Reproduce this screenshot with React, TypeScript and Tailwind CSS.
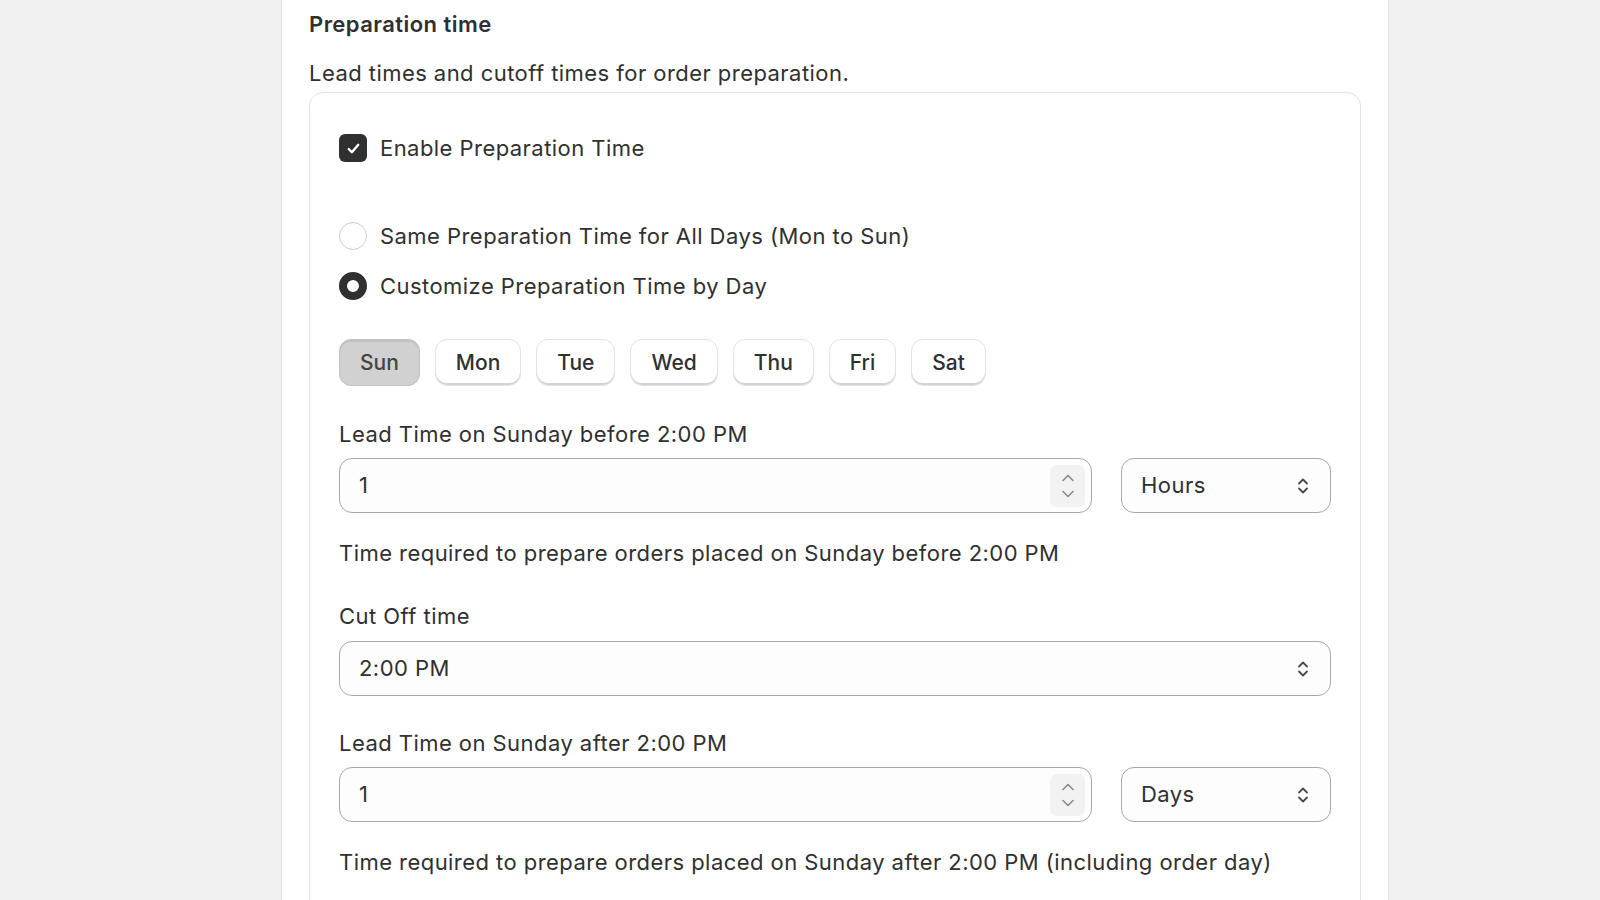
import React from 'react';

const days = ['Sun', 'Mon', 'Tue', 'Wed', 'Thu', 'Fri', 'Sat'];

function SelectIcon() {
  return (
    <svg width="14" height="24" viewBox="0 0 14 24" fill="none" stroke="#4a4a4a" strokeWidth="1.8" strokeLinecap="round" strokeLinejoin="round">
      <path d="M3 9.5 7 5.5l4 4" />
      <path d="M3 14.5 7 18.5l4-4" />
    </svg>
  );
}

function Spinner() {
  return (
    <div className="flex h-[42px] w-[35px] flex-col items-center justify-center gap-[6px] rounded-[7px] bg-[#f2f2f2]">
      <svg width="16" height="10" viewBox="0 0 16 10" fill="none" stroke="#8a8a8a" strokeWidth="1.6" strokeLinecap="round" strokeLinejoin="round">
        <path d="M3 7.5 8 2.5l5 5" />
      </svg>
      <svg width="16" height="10" viewBox="0 0 16 10" fill="none" stroke="#8a8a8a" strokeWidth="1.6" strokeLinecap="round" strokeLinejoin="round">
        <path d="M3 2.5 8 7.5l5-5" />
      </svg>
    </div>
  );
}

function NumberField({ value }: { value: string }) {
  return (
    <div className="flex h-[55px] flex-1 items-center rounded-[13px] border border-[#a8a8a8] bg-[#fdfdfd] pl-[19px] pr-[6px]">
      <span className="flex-1">{value}</span>
      <Spinner />
    </div>
  );
}

function SelectField({ value, className = '' }: { value: string; className?: string }) {
  return (
    <div className={`flex h-[55px] items-center justify-between rounded-[13px] border border-[#a8a8a8] bg-[#fdfdfd] pl-[19px] pr-[20px] ${className}`}>
      <span>{value}</span>
      <SelectIcon />
    </div>
  );
}

function LeadTimeGroup({ label, value, unit, help }: { label: string; value: string; unit: string; help: string }) {
  return (
    <div>
      <p className="leading-[28px]">{label}</p>
      <div className="mt-[10px] flex gap-[29px]">
        <NumberField value={value} />
        <SelectField value={unit} className="w-[210px]" />
      </div>
      <p className="mt-[26px] leading-[28px]">{help}</p>
    </div>
  );
}

export default function App() {
  return (
    <div className="min-h-screen bg-[#f1f1f1] text-[22px] tracking-[0.45px] text-[#303030]" style={{ fontFamily: 'Inter, "Noto Sans", sans-serif' }}>
      <div className="ml-[281px] min-h-screen w-[1108px] border-x border-[#e3e3e3] bg-white px-[27px] pt-[10px]">
        <h2 className="font-semibold leading-[28px]">Preparation time</h2>
        <p className="mt-[21px] leading-[28px]">Lead times and cutoff times for order preparation.</p>

        <div className="mt-[5px] rounded-[14px] border border-[#e3e3e3] px-[29px] pb-[40px] pt-[41px]">
          <label className="flex items-center gap-[13px]">
            <span className="flex h-[28px] w-[28px] items-center justify-center rounded-[6px] bg-[#303030]">
              <svg width="17" height="17" viewBox="0 0 16 16" fill="none" stroke="white" strokeWidth="2.2" strokeLinecap="round" strokeLinejoin="round">
                <path d="M3.5 8.5 6.5 11.5 12.5 4.5" />
              </svg>
            </span>
            <span className="leading-[28px]">Enable Preparation Time</span>
          </label>

          <div className="mt-[60px] flex flex-col gap-[22px]">
            <label className="flex items-center gap-[13px]">
              <span className="h-[28px] w-[28px] rounded-full border-[1.5px] border-[#cccccc] bg-white" />
              <span className="leading-[28px]">Same Preparation Time for All Days (Mon to Sun)</span>
            </label>
            <label className="flex items-center gap-[13px]">
              <span className="h-[28px] w-[28px] rounded-full border-[8px] border-[#303030] bg-white" />
              <span className="leading-[28px]">Customize Preparation Time by Day</span>
            </label>
          </div>

          <div className="mt-[39px] flex gap-[15px] text-[21px] tracking-normal">
            {days.map((d) =>
              d === 'Sun' ? (
                <button key={d} className="h-[47px] rounded-[12px] border border-[#c2c2c2] bg-[#d1d1d1] px-[20px] font-medium text-[#444444] shadow-[inset_0_2px_1px_rgba(0,0,0,0.08)]">
                  {d}
                </button>
              ) : (
                <button key={d} className="h-[47px] rounded-[12px] border border-[#e3e3e3] bg-white px-[20px] font-medium shadow-[inset_0_-2px_0_#d4d4d4]">
                  {d}
                </button>
              )
            )}
          </div>

          <div className="mt-[34px]">
            <LeadTimeGroup
              label="Lead Time on Sunday before 2:00 PM"
              value="1"
              unit="Hours"
              help="Time required to prepare orders placed on Sunday before 2:00 PM"
            />
          </div>

          <div className="mt-[35px]">
            <p className="leading-[28px]">Cut Off time</p>
            <SelectField value="2:00 PM" className="mt-[11px]" />
          </div>

          <div className="mt-[33px]">
            <LeadTimeGroup
              label="Lead Time on Sunday after 2:00 PM"
              value="1"
              unit="Days"
              help="Time required to prepare orders placed on Sunday after 2:00 PM (including order day)"
            />
          </div>
        </div>
      </div>
    </div>
  );
}
